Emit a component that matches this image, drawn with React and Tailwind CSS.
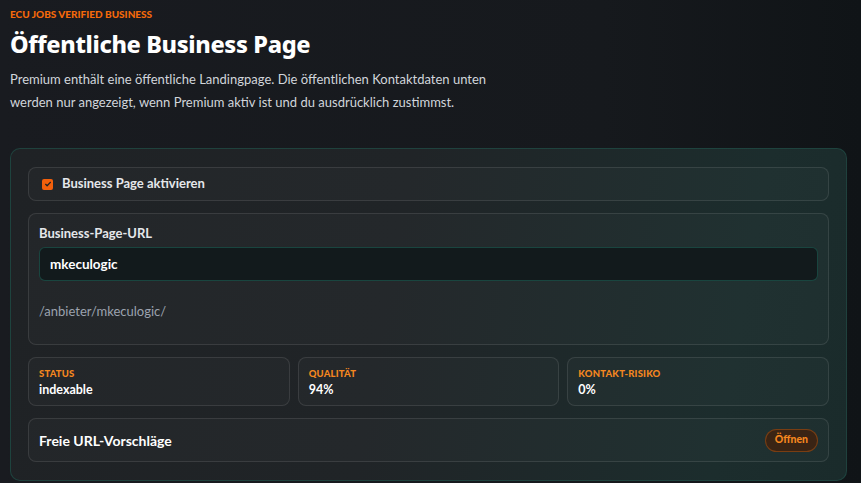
import React from "react";

const Stat = ({ label, value }) => (
  <div className="rounded-lg border border-white/10 bg-white/[0.02] px-[10px] pt-[9px] pb-[7px]">
    <div className="text-[9.5px] font-black uppercase tracking-[0.02em] text-[#f5871f] leading-[14px]">{label}</div>
    <div className="mt-[1px] text-[12.5px] font-bold text-white leading-[16px]">{value}</div>
  </div>
);

export default function App() {
  return (
    <div
      className="min-h-[483px] w-full bg-[linear-gradient(90deg,#191b20_0%,#16191d_70%,#101417_100%)] px-[10px] pt-[7px] pb-[4px] text-[#e5e7eb]"
      style={{ fontFamily: 'Lato, "Noto Sans", sans-serif' }}
    >
      <div className="text-[10px] font-black uppercase text-[#f5690a] leading-[14px]">ECU JOBS VERIFIED BUSINESS</div>
      <h1
        className="mt-[8px] text-[23.5px] font-extrabold text-white leading-[30px] tracking-[-0.015em]"
        style={{ fontFamily: '"Noto Sans", sans-serif' }}
      >
        Öffentliche Business Page
      </h1>
      <p className="mt-[9px] w-[500px] text-[13px] leading-[23px] text-[#d1d5db]">
        Premium enthält eine öffentliche Landingpage. Die öffentlichen Kontaktdaten unten werden nur angezeigt, wenn Premium aktiv ist und du ausdrücklich zustimmst.
      </p>

      <div className="mt-[34px] w-[837px] rounded-[10px] border border-[#1f4a44]/80 bg-[linear-gradient(100deg,#1f2225_0%,#202427_45%,#1c2d2d_85%,#1a2b2b_100%)] px-[17px] pt-[18px] pb-[18px] flex flex-col gap-[12px]">
        <label className="flex h-[34px] items-center gap-[9px] rounded-lg border border-white/10 bg-white/[0.02] px-[13px]">
          <span className="flex h-[11px] w-[11px] items-center justify-center rounded-[2px] bg-[#f2600c]">
            <svg viewBox="0 0 12 12" className="h-[8px] w-[8px]" fill="none" stroke="#1f2225" strokeWidth="2" strokeLinecap="round" strokeLinejoin="round">
              <path d="M2.5 6.5l2.2 2.2L9.5 3.5" />
            </svg>
          </span>
          <span className="text-[13px] font-bold text-[#e5e7eb]">Business Page aktivieren</span>
        </label>

        <div className="rounded-lg border border-white/10 bg-white/[0.02] px-[10px] pt-[10px] pb-[24px]">
          <div className="text-[13px] font-bold text-[#e5e7eb] leading-[18px]">Business-Page-URL</div>
          <div className="mt-[5px] flex h-[34px] items-center rounded-md border border-[#1b4a44]/90 bg-[#121a1c] px-[10px] text-[13.5px] font-bold text-white">
            mkeculogic
          </div>
          <div className="mt-[21px] text-[13px] text-[#9ca3af] leading-[18px]">/anbieter/mkeculogic/</div>
        </div>

        <div className="grid grid-cols-3 gap-[8px]">
          <Stat label="Status" value="indexable" />
          <Stat label="Qualität" value="94%" />
          <Stat label="Kontakt-Risiko" value="0%" />
        </div>

        <div className="flex h-[44px] items-center justify-between rounded-lg border border-white/10 bg-white/[0.02] pl-[10px] pr-[10px]">
          <span className="text-[14px] font-bold text-white">Freie URL-Vorschläge</span>
          <button className="h-[23px] rounded-full border border-[#8a4412]/80 bg-[#3a2414] px-[9px] text-[10.5px] font-black text-[#f5871f]">Öffnen</button>
        </div>
      </div>
    </div>
  );
}
